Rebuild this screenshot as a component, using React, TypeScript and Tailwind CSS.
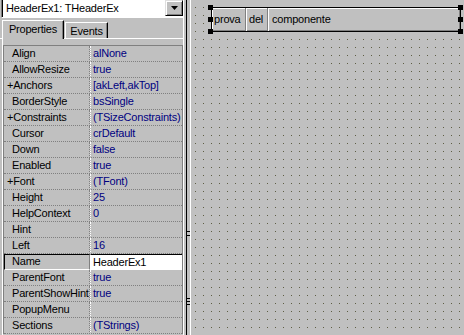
import React from "react";

type Prop = { name: string; value: string; plus?: boolean };

const props: Prop[] = [
  { name: "Align", value: "alNone" },
  { name: "AllowResize", value: "true" },
  { name: "Anchors", value: "[akLeft,akTop]", plus: true },
  { name: "BorderStyle", value: "bsSingle" },
  { name: "Constraints", value: "(TSizeConstraints)", plus: true },
  { name: "Cursor", value: "crDefault" },
  { name: "Down", value: "false" },
  { name: "Enabled", value: "true" },
  { name: "Font", value: "(TFont)", plus: true },
  { name: "Height", value: "25" },
  { name: "HelpContext", value: "0" },
  { name: "Hint", value: "" },
  { name: "Left", value: "16" },
  { name: "Name", value: "HeaderEx1" },
  { name: "ParentFont", value: "true" },
  { name: "ParentShowHint", value: "true" },
  { name: "PopupMenu", value: "" },
  { name: "Sections", value: "(TStrings)" },
];

function Handle({ x, y }: { x: number; y: number }) {
  return <div className="absolute w-[5px] h-[5px] bg-black" style={{ left: x, top: y }} />;
}

function Inspector() {
  return (
    <div className="w-[184px] h-full flex flex-col border-r border-r-white shrink-0">
      {/* combo */}
      <div className="h-[18px] ml-[1px] flex border-l border-l-[#808080] border-b border-b-white">
        <div className="flex-1 flex bg-white border-l border-l-black">
          <div className="flex-1 pl-[3px] leading-[16px] h-[16px] whitespace-nowrap">HeaderEx1: THeaderEx</div>
          <div className="w-[18px] h-[16px] bg-[#c0c0c0] border border-t-[#dfdfdf] border-l-[#dfdfdf] border-r-black border-b-black shadow-[inset_1px_1px_#fff,inset_-1px_-1px_#808080] flex items-center justify-center">
            <svg width="7" height="4" viewBox="0 0 7 4">
              <polygon points="0,0 7,0 3.5,4" fill="#000" />
            </svg>
          </div>
        </div>
      </div>
      {/* tabs */}
      <div className="h-[21px] flex items-end border-b border-b-white">
        <div className="relative z-10 ml-[2px] w-[62px] h-[19px] -mb-[1px] bg-[#c0c0c0] border-t border-l border-t-white border-l-white border-r border-r-black shadow-[inset_-1px_0_#808080] flex items-center justify-center pb-[1px]">
          Properties
        </div>
        <div className="ml-[1px] w-[43px] h-[16px] border-t border-l border-t-white border-l-white border-r border-r-black shadow-[inset_-1px_0_#808080] flex items-center justify-center pt-[1px]">
          Events
        </div>
      </div>
      {/* page */}
      <div className="flex-1 ml-[2px] border-l border-l-white pt-[6px] overflow-hidden">
        <div className="w-[180px] border-t border-t-[#808080] border-l border-l-[#808080] border-r border-r-[#808080]">
          {props.map((p) => {
            const sel = p.name === "Name";
            return (
              <div key={p.name} className="flex h-[16px]">
                <div
                  className={
                    "w-[86px] border-r border-r-[#808080] whitespace-nowrap overflow-hidden " +
                    (sel
                      ? "border-t border-t-black border-l border-l-black border-b border-b-white pl-[7px] leading-[13px]"
                      : "border-b border-dotted border-b-[#808080] leading-[15px] " + (p.plus ? "pl-[3px]" : "pl-[8px]"))
                  }
                >
                  {p.plus ? "+" : ""}
                  {p.name}
                </div>
                <div
                  className={
                    "flex-1 border-l border-l-white whitespace-nowrap overflow-hidden pl-[2px] " +
                    (sel
                      ? "bg-white text-black border-t border-t-black leading-[14px]"
                      : "text-[#000080] border-b border-dotted border-b-[#808080] leading-[15px]")
                  }
                >
                  {p.value}
                </div>
              </div>
            );
          })}
        </div>
      </div>
    </div>
  );
}

export default function App() {
  return (
    <div
      className="w-[464px] h-[335px] overflow-hidden bg-[#c0c0c0] flex text-[11px] tracking-[-0.2px] text-black"
      style={{ fontFamily: '"Liberation Sans", Arial, sans-serif' }}
    >
      <Inspector />
      {/* splitter */}
      <div className="relative w-[7px] h-full flex shrink-0">
        <div className="w-[2px]" />
        <div className="w-[1px] bg-black" />
        <div className="w-[3px]" />
        <div className="w-[1px] bg-white" />
        <div className="absolute left-[2px] top-[230px] w-[1px] h-[10px] bg-black" />
        <div className="absolute left-[3px] top-[231px] w-[3px] h-[1px] bg-black" />
        <div className="absolute left-[3px] top-[235px] w-[3px] h-[1px] bg-black" />
        <div className="absolute left-[3px] top-[298px] w-[3px] h-[1px] bg-black" />
        <div className="absolute left-[3px] top-[301px] w-[3px] h-[1px] bg-black" />
        <div className="absolute left-[3px] top-[304px] w-[3px] h-[1px] bg-black" />
      </div>
      {/* designer */}
      <div className="relative flex-1 h-full bg-[conic-gradient(at_1px_1px,transparent_270deg,#5e5e44_270deg)] bg-[length:8px_8px] bg-[position:4px_7px]">
        <div className="absolute left-[20px] top-[7px] w-[250px] h-[25px] bg-[#c0c0c0] border border-black shadow-[inset_1px_1px_#fff,inset_-1px_-1px_#808080] flex">
          <div className="w-[34px] pl-[2px] border-r border-r-[#808080] flex items-center leading-none">prova</div>
          <div className="w-[22px] pl-[2px] border-l border-l-white border-r border-r-[#808080] flex items-center leading-none">del</div>
          <div className="flex-1 pl-[3px] border-l border-l-white flex items-center leading-none">componente</div>
        </div>
        <Handle x={17} y={5} />
        <Handle x={17} y={17} />
        <Handle x={17} y={29} />
        <Handle x={267} y={5} />
        <Handle x={267} y={17} />
        <Handle x={267} y={29} />
      </div>
    </div>
  );
}
